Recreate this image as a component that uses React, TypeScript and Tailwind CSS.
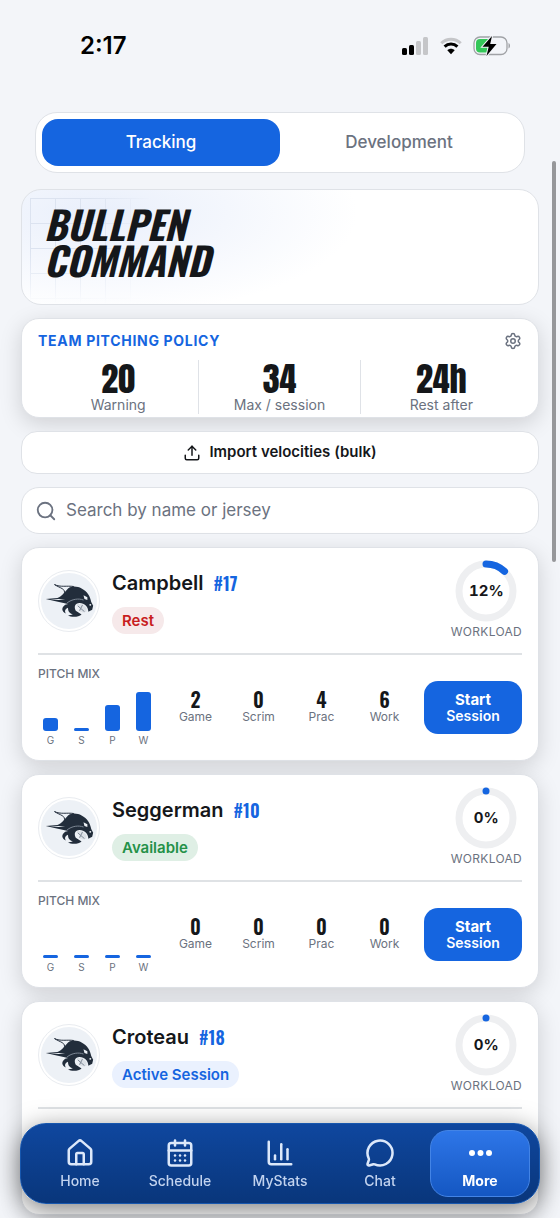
import { Search, Settings, Upload, House, CalendarDays, ChartColumn, MessageCircle } from 'lucide-react'

type Tone = 'rest' | 'available' | 'active'

type Pitcher = {
  name: string
  jersey: number
  status: string
  tone: Tone
  workload: number
  mix?: { short: string; label: string; value: number }[]
}

const mix = (game: number, scrim: number, prac: number, work: number) => [
  { short: 'G', label: 'Game', value: game },
  { short: 'S', label: 'Scrim', value: scrim },
  { short: 'P', label: 'Prac', value: prac },
  { short: 'W', label: 'Work', value: work },
]

const pitchers: Pitcher[] = [
  { name: 'Campbell', jersey: 17, status: 'Rest', tone: 'rest', workload: 12, mix: mix(2, 0, 4, 6) },
  { name: 'Seggerman', jersey: 10, status: 'Available', tone: 'available', workload: 0, mix: mix(0, 0, 0, 0) },
  { name: 'Croteau', jersey: 18, status: 'Active Session', tone: 'active', workload: 0 },
]

const tones: Record<Tone, string> = {
  rest: 'bg-[#f6e9ea] text-[#c81e1e]',
  available: 'bg-[#dfefe5] text-[#249148]',
  active: 'bg-[#eaf1fe] text-[#1565e0]',
}

const policy = [
  { value: '20', label: 'Warning' },
  { value: '34', label: 'Max / session' },
  { value: '24h', label: 'Rest after' },
]

const nav = [
  { label: 'Home', icon: House },
  { label: 'Schedule', icon: CalendarDays },
  { label: 'MyStats', icon: ChartColumn },
  { label: 'Chat', icon: MessageCircle },
]

// scoreboard faces for titles and figures
const display = "font-[Oswald,'Roboto_Condensed',Roboto,sans-serif]"
const figures = "font-[Anton,Oswald,'Roboto_Condensed',Roboto,sans-serif]"

function StatusBar() {
  return (
    <div className="flex items-center justify-between h-[91px] pl-20 pr-12">
      <span className="text-[24px] font-semibold text-black">2:17</span>
      <div className="flex items-center gap-[11px]">
        <svg width="27" height="18" viewBox="0 0 27 18">
          <rect x="0" y="11" width="5" height="7" rx="1.5" fill="#000" />
          <rect x="7" y="8" width="5" height="10" rx="1.5" fill="#000" />
          <rect x="14" y="4" width="5" height="14" rx="1.5" fill="#c5c6c9" />
          <rect x="21" y="0" width="5" height="18" rx="1.5" fill="#c5c6c9" />
        </svg>
        <svg width="22" height="18" viewBox="0 0 22 18" fill="none" strokeWidth="3">
          <path d="M1.3 6.2C6.8 .8 15.2 .8 20.7 6.2" stroke="#c5c6c9" />
          <path d="M4.6 9.7C8.2 6.2 13.8 6.2 17.4 9.7" stroke="#000" />
          <path d="M7.3 13.3C9.4 11.3 12.6 11.3 14.7 13.3L11 17.3Z" fill="#000" />
        </svg>
        <svg width="39" height="20" viewBox="0 0 39 20">
          <rect x="1" y="1" width="33" height="17.5" rx="6" fill="none" stroke="#a0a2a6" strokeWidth="1.3" />
          <path d="M7 3h9v13.5H7a4 4 0 0 1-4-4V7a4 4 0 0 1 4-4Z" fill="#34c759" />
          <path d="M35.5 7v5.5c2-.8 2-4.7 0-5.5Z" fill="#a0a2a6" />
          <path d="M19 0L9.5 10.8h6.2L13.5 20 23.5 8h-6.3Z" fill="#000" stroke="#f3f5f9" strokeWidth="2" paintOrder="stroke" />
        </svg>
      </div>
    </div>
  )
}

function TeamLogo() {
  return (
    <div className="flex items-center justify-center w-[62px] h-[62px] shrink-0 rounded-full border border-[#e9ecf0] bg-white p-px">
      <svg viewBox="0 0 60 60" className="w-full h-full" aria-hidden="true">
        <circle cx="30" cy="30" r="29" fill="#edf1f6" />
        <path d="M15 13C21 16 28 14 35 15M15 13C21 17 27 17 25 23" fill="none" stroke="#222d3b" strokeWidth="1" />
        <path d="M6 28L18 27C23 25 26 20 29 17C33 14 39 15 43 17C49 20 52 25 53 31L55 35L54 39L50 41C50 36 46 32 41 32C36 32 35 36 37 40L43 44C40 47 32 47 29 45L34 44C29 42 29 39 29 37C26 38 25 41 27 43C22 41 22 37 26 34L29 33L15 30Z" fill="#222d3b" />
        <path d="M10 28L20 28L26 28.500L19 29ZM45 24L49 26L49 29L46 28Z" fill="#edf1f6" />
        <path d="M28 32C33 28 40 27 45 29" fill="none" stroke="#7e8996" strokeWidth="1" />
        <path d="M38 33L43 33L48 37L48 41L44 42L40 40L41 37Z" fill="#dce1e7" />
        <path d="M39 35L46 41M44 34L41 40" stroke="#7e8996" strokeWidth="1" />
        <circle cx="52" cy="34" r="1" fill="#edf1f6" />
      </svg>
    </div>
  )
}

function WorkloadRing({ value }: { value: number }) {
  const c = 2 * Math.PI * 27
  return (
    <div className="flex flex-col items-center">
      <div className="grid place-items-center w-[62px] h-[62px]">
        <svg viewBox="0 0 62 62" className="col-start-1 row-start-1 w-full h-full -rotate-90" fill="none" strokeWidth="7">
          <circle cx="31" cy="31" r="27" stroke="#eeeff1" />
          <circle cx="31" cy="31" r="27" stroke="#1565e0" strokeLinecap="round" strokeDasharray={`${Math.max((c * value) / 100, 0.01)} ${c}`} />
        </svg>
        <span className="col-start-1 row-start-1 text-[15px] font-bold tabular-nums text-[#15171a]">{value}%</span>
      </div>
      <span className="text-[12px] leading-5 tracking-wide text-[#6b7280]">WORKLOAD</span>
    </div>
  )
}

function PitcherCard({ pitcher }: { pitcher: Pitcher }) {
  return (
    <article className="rounded-[18px] border border-[#dfe2e7] bg-white px-4 h-[214px] shadow-[0_6px_22px_rgba(0,0,0,0.15)]">
      <div className="flex justify-between h-[107px] border-b-2 border-[#dfe2e5] pt-3">
        <div className="flex gap-3 pt-[10px]">
          <TeamLogo />
          <div className="flex flex-col items-start gap-3">
            <div className="flex items-center gap-[10px] h-[25px]">
              <h2 className="text-[20px] font-semibold text-[#15171a]">{pitcher.name}</h2>
              <span className={`${display} text-[18px] leading-6 font-semibold text-[#1565e0]`}>#{pitcher.jersey}</span>
            </div>
            <span className={`rounded-full px-[10px] text-[15px] leading-[27px] font-semibold ${tones[pitcher.tone]}`}>{pitcher.status}</span>
          </div>
        </div>
        <WorkloadRing value={pitcher.workload} />
      </div>
      {pitcher.mix && (
        <div className="flex">
          <div className="w-[126px] shrink-0">
            <div className="pt-[11px] text-[12px] leading-4 font-medium text-[#6b7280]">PITCH MIX</div>
            <div className="flex h-[49px] items-end gap-4 px-[5px]">
              {pitcher.mix.map((m) => (
                <div key={m.short} className="w-[15px] rounded-[3px] bg-[#1565e0]" style={{ height: Math.max(m.value * 6.5, 3) }} />
              ))}
            </div>
            <div className="flex gap-4 px-[5px] pt-[3px]">
              {pitcher.mix.map((m) => (
                <span key={m.short} className="w-[15px] text-center text-[10px] leading-[12px] text-[#6b7280]">{m.short}</span>
              ))}
            </div>
          </div>
          <dl className="grid grid-cols-4 flex-1 pt-[33px] pr-2">
            {pitcher.mix.map((m) => (
              <div key={m.label} className="flex flex-col-reverse justify-end items-center">
                <dt className="text-[12px] leading-[14px] text-[#6b7280]">{m.label}</dt>
                <dd className={`${display} text-[20px] leading-[22px] font-semibold text-[#15171a]`}>{m.value}</dd>
              </div>
            ))}
          </dl>
          <button type="button" className="mt-[26px] w-[98px] h-[53px] rounded-[14px] bg-[#1565e0] text-[15px] leading-4 font-bold text-white">
            Start
            <span className="block text-[14px] font-semibold">Session</span>
          </button>
        </div>
      )}
    </article>
  )
}

function BottomNav() {
  return (
    <nav className="fixed inset-x-5 bottom-[14px] h-[81px] rounded-[26px] border border-[#1757ae] bg-linear-to-b from-[#0f479f] to-[#09367b] px-[9px] py-[6px] shadow-[0_6px_26px_rgba(0,0,0,0.5)] grid grid-cols-5">
      {nav.map(({ label, icon: Icon }) => (
        <button key={label} type="button" className="flex flex-col items-center pt-2 gap-1 text-[14px] leading-[18px] font-medium text-[#c2d3ef]">
          <Icon size={30} strokeWidth={2} className="text-[#dce8fa]" />
          {label}
        </button>
      ))}
      <button type="button" className="flex flex-col items-center pt-[7px] gap-1 rounded-[18px] border border-[#4384e6] bg-linear-to-b from-[#2e76e8] to-[#1457c2] text-[14px] leading-[18px] font-bold text-white">
        <svg width="30" height="30" viewBox="0 0 30 30" fill="currentColor" aria-hidden="true">
          <circle cx="7" cy="15" r="3" />
          <circle cx="15.5" cy="15" r="3" />
          <circle cx="24" cy="15" r="3" />
        </svg>
        More
      </button>
    </nav>
  )
}

export default function App() {
  return (
    <div className="h-screen overflow-hidden bg-[#f3f5f9] font-[Inter,sans-serif]">
      <StatusBar />
      <div className="fixed right-1 top-[161px] w-1 h-[401px] rounded-full bg-[#96979a]" />
      <main className="px-[21px] pt-[21px]">
        <div className="mx-[14px] mb-4 grid grid-cols-2 h-[61px] rounded-[22px] border border-[#dfe2e7] bg-white p-[6px]">
          <button type="button" className="rounded-[16px] bg-[#1565e0] text-[17px] font-medium text-white">Tracking</button>
          <button type="button" className="text-[17px] font-medium text-[#6b7280]">Development</button>
        </div>

        <div className="flex flex-col gap-[13px]">
          <header className="relative overflow-hidden h-[116px] rounded-[20px] border border-[#dfe2e7] bg-white bg-[radial-gradient(ellipse_50%_90%_at_15%_20%,#e9effb,#ffffff)] pl-[22px] pt-[15px]">
            <div className="absolute left-2 top-2 w-[120px] h-[106px] bg-[linear-gradient(#dce3f0_1px,transparent_1px),linear-gradient(90deg,#dce3f0_1px,transparent_1px)] bg-[size:25px_25px] mask-r-from-50% mask-b-from-50%" />
            <h1 className={`${display} relative text-[39px] leading-[36px] font-bold italic text-[#15171a]`}>
              BULLPEN<br />COMMAND
            </h1>
          </header>

          <section className="h-[100px] rounded-[18px] border border-[#dfe2e7] bg-white px-4 pt-3 shadow-[0_6px_22px_rgba(0,0,0,0.15)]">
            <div className="flex items-center justify-between">
              <h2 className="text-[14px] leading-5 font-bold tracking-wider text-[#1565e0]">TEAM PITCHING POLICY</h2>
              <button type="button" aria-label="Policy settings" className="text-[#6b7280]">
                <Settings size={18} strokeWidth={2} />
              </button>
            </div>
            <dl className="mt-[9px] grid grid-cols-3 divide-x divide-[#dfe2e7]">
              {policy.map((p) => (
                <div key={p.label} className="flex flex-col-reverse items-center h-[54px] justify-end">
                  <dt className="text-[14px] leading-[14px] text-[#6b7280]">{p.label}</dt>
                  <dd className={`${figures} text-[34px] leading-[38px] text-[#15171a]`}>{p.value}</dd>
                </div>
              ))}
            </dl>
          </section>

          <button type="button" className="flex items-center justify-center gap-2 h-[43px] rounded-[16px] border border-[#dfe2e7] bg-white text-[15px] font-semibold text-[#15171a]">
            <Upload size={18} strokeWidth={2} />
            Import velocities (bulk)
          </button>

          <label className="flex items-center gap-[9px] h-[47px] rounded-[18px] border border-[#dfe2e7] bg-white px-[13px] text-[#6b7280]">
            <Search size={22} strokeWidth={2} />
            <input type="search" aria-label="Search pitchers" placeholder="Search by name or jersey" className="flex-1 min-w-0 bg-transparent text-[17px] outline-none placeholder:text-[#6b7280]" />
          </label>

          {pitchers.map((p) => (
            <PitcherCard key={p.jersey} pitcher={p} />
          ))}
        </div>
      </main>
      <BottomNav />
    </div>
  )
}
